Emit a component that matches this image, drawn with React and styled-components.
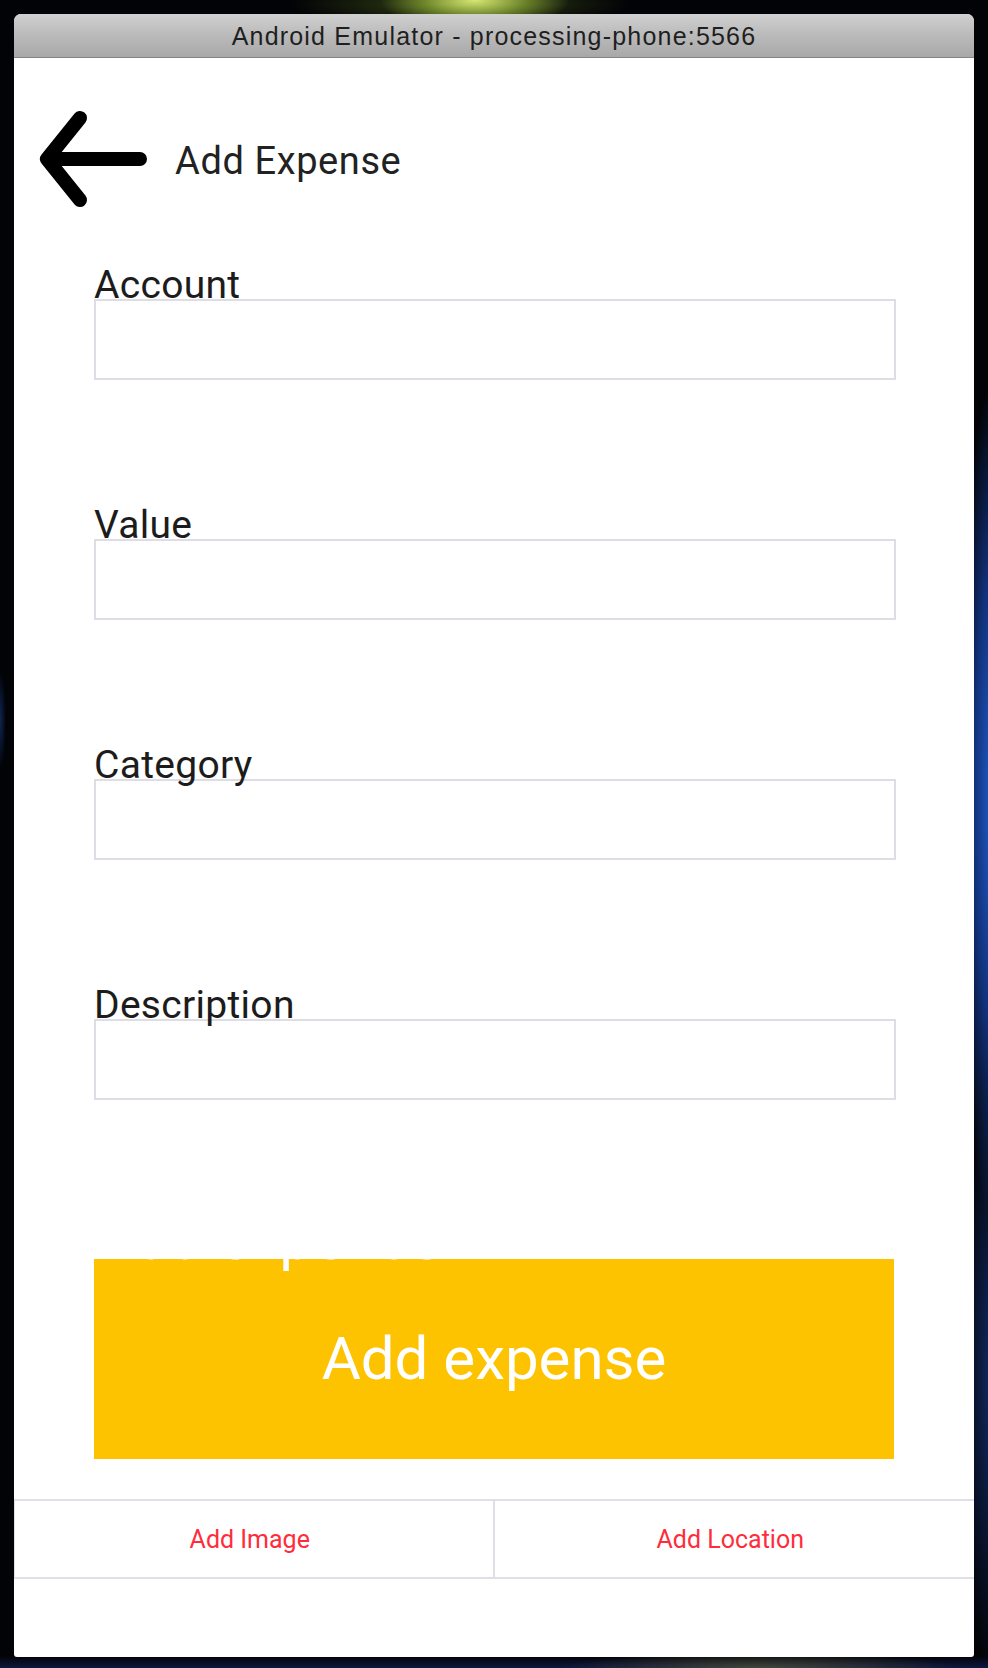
import React from "react";
import styled, { createGlobalStyle } from "styled-components";

const GlobalStyle = createGlobalStyle`
  html, body {
    margin: 0;
    padding: 0;
  }
  body {
    width: 988px;
    height: 1668px;
    overflow: hidden;
    background-color: #020306;
    background-image:
      radial-gradient(ellipse 95px 30px at 475px 0px, rgba(224, 240, 120, 0.95), rgba(160, 195, 60, 0.55) 55%, rgba(0,0,0,0) 100%),
      radial-gradient(ellipse 170px 22px at 460px 4px, rgba(110, 140, 40, 0.5), rgba(0,0,0,0) 100%),
      radial-gradient(ellipse 36px 420px at 994px 800px, rgba(34, 96, 210, 1), rgba(22, 64, 160, 0.75) 55%, rgba(0,0,0,0) 100%),
      radial-gradient(ellipse 30px 300px at 992px 1380px, rgba(22, 52, 125, 0.8), rgba(0,0,0,0) 100%),
      radial-gradient(ellipse 200px 16px at 760px 1668px, rgba(110, 110, 60, 0.55), rgba(0,0,0,0) 100%),
      linear-gradient(to top, rgba(15, 25, 70, 0.9) 0px, rgba(0,0,0,0) 12px),
      radial-gradient(ellipse 6px 50px at 0px 720px, rgba(30, 70, 160, 0.5), rgba(0,0,0,0) 100%);
    font-family: Roboto, "Noto Sans", sans-serif;
  }
`;

const Window = styled.div`
  margin: 14px 0 0 14px;
  width: 960px;
  height: 1643px;
  display: flex;
  flex-direction: column;
  background: #ffffff;
  border-radius: 7px 7px 3px 3px;
  overflow: hidden;
`;

const TitleBar = styled.div`
  height: 44px;
  flex: 0 0 auto;
  display: flex;
  align-items: center;
  justify-content: center;
  background: linear-gradient(to bottom, #d0d0d0 0%, #bcbcbc 45%, #a8a8a8 100%);
  border-bottom: 1px solid #858585;
  font-family: "Liberation Sans", Arial, sans-serif;
  font-size: 25px;
  letter-spacing: 1.2px;
  color: #1f1f1f;
  padding-top: 1px;
  box-sizing: border-box;
`;

const Header = styled.div`
  height: 202px;
  flex: 0 0 auto;
  display: flex;
  align-items: center;
  padding-left: 16px;
  gap: 21px;
`;

const BackIcon = styled.svg`
  width: 124px;
  height: 112px;
  flex: 0 0 auto;
  display: block;
`;

const Title = styled.h1`
  margin: 0;
  padding-top: 4px;
  font-family: Roboto, sans-serif;
  font-weight: 400;
  font-size: 38px;
  line-height: 44px;
  letter-spacing: 0.6px;
  color: #222222;
`;

const Form = styled.div`
  display: flex;
  flex-direction: column;
  gap: 125px;
  padding: 5px 78px 0 80px;
`;

const Field = styled.div`
  display: flex;
  flex-direction: column;
`;

const Label = styled.label`
  position: relative;
  z-index: 1;
  font-family: Roboto, sans-serif;
  font-size: 39px;
  line-height: 40px;
  height: 40px;
  margin-bottom: -6px;
  color: #1c1c1c;
  letter-spacing: 0.3px;
`;

const Input = styled.div`
  height: 81px;
  box-sizing: border-box;
  border: 2px solid #dedde5;
`;

const ButtonArea = styled.div`
  padding: 159px 80px 0 80px;
  flex: 0 0 auto;
`;

const PrimaryButton = styled.div`
  position: relative;
  width: 800px;
  height: 200px;
  background: #fec300;
  display: flex;
  align-items: center;
  justify-content: center;
  font-family: Roboto, sans-serif;
  font-size: 60px;
  color: #ffffff;
  line-height: 60px;
`;

const GhostLabel = styled.span`
  position: absolute;
  left: 2px;
  top: -50px;
  font-size: 60px;
  line-height: 60px;
  color: #ffffff;
  white-space: nowrap;
`;

const TabBar = styled.div`
  margin-top: 40px;
  height: 80px;
  box-sizing: border-box;
  display: grid;
  grid-template-columns: 1fr 1fr;
  border-top: 2px solid #e0dfe7;
  border-bottom: 2px solid #e0dfe7;
  border-left: 1px solid #e0dfe7;
`;

const Tab = styled.div`
  display: flex;
  align-items: center;
  justify-content: center;
  font-family: Roboto, sans-serif;
  font-size: 25px;
  color: #ff2c3c;
  padding-right: 8px;
  border-right: ${(p) => (p.$first ? "2px solid #e0dfe7" : "none")};
`;

const fields = ["Account", "Value", "Category", "Description"];

export default function App() {
  return (
    <>
      <GlobalStyle />
      <Window>
        <TitleBar>Android Emulator - processing-phone:5566</TitleBar>
        <Header>
          <BackIcon viewBox="0 0 124 112">
            <path
              d="M50 15 L17 56 L50 97 M17 56 L110 56"
              fill="none"
              stroke="#000"
              strokeWidth="14"
              strokeLinecap="round"
              strokeLinejoin="round"
            />
          </BackIcon>
          <Title>Add Expense</Title>
        </Header>
        <Form>
          {fields.map((f) => (
            <Field key={f}>
              <Label>{f}</Label>
              <Input />
            </Field>
          ))}
        </Form>
        <ButtonArea>
          <PrimaryButton>
            <GhostLabel aria-hidden="true">Add expense</GhostLabel>
            Add expense
          </PrimaryButton>
        </ButtonArea>
        <TabBar>
          <Tab $first>Add Image</Tab>
          <Tab>Add Location</Tab>
        </TabBar>
      </Window>
    </>
  );
}
